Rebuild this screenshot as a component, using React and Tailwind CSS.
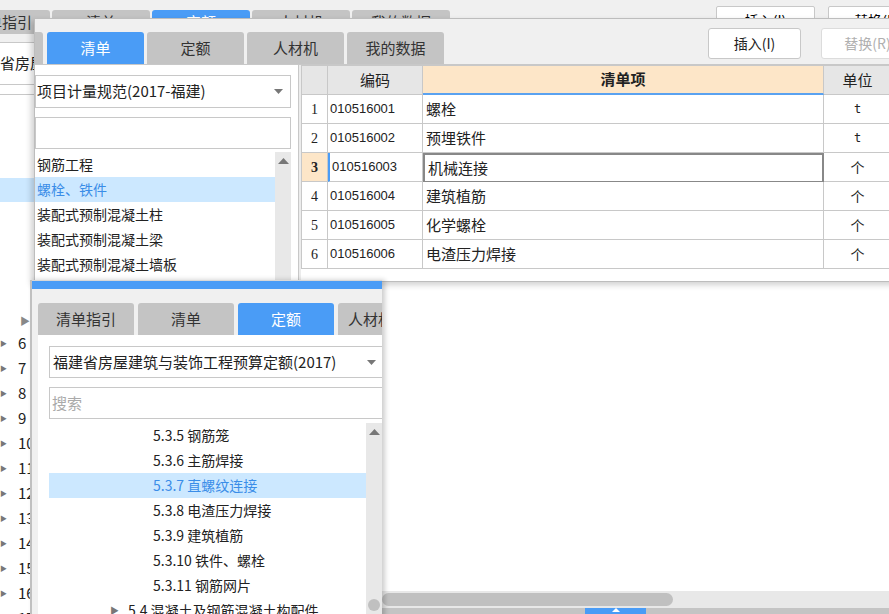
import React from 'react';

const cjk = { fontFamily: '"Microsoft YaHei", "Noto Sans CJK SC", "Liberation Sans", sans-serif' };

const Tab = ({ label, active, className = '' }) => (
  <div
    className={`flex shrink-0 items-center justify-center rounded-t-[3px] text-[15px] ${
      active ? 'bg-[#4a9cf6] text-white' : 'bg-[#c4c4c4] text-[#333]'
    } ${className}`}
  >
    {label}
  </div>
);

const Caret = ({ className = '' }) => (
  <svg width="9" height="5" viewBox="0 0 9 5" className={className}>
    <path d="M0 0h9L4.5 5z" fill="#777" />
  </svg>
);

const UpArrow = () => (
  <svg width="11" height="6" viewBox="0 0 11 6">
    <path d="M0 6L5.5 0 11 6z" fill="#777" />
  </svg>
);

const rows = [
  ['010516001', '螺栓', 't'],
  ['010516002', '预埋铁件', 't'],
  ['010516003', '机械连接', '个'],
  ['010516004', '建筑植筋', '个'],
  ['010516005', '化学螺栓', '个'],
  ['010516006', '电渣压力焊接', '个'],
];

const qdList = ['钢筋工程', '螺栓、铁件', '装配式预制混凝土柱', '装配式预制混凝土梁', '装配式预制混凝土墙板'];

const deList = ['5.3.5 钢筋笼', '5.3.6 主筋焊接', '5.3.7 直螺纹连接', '5.3.8 电渣压力焊接', '5.3.9 建筑植筋', '5.3.10 铁件、螺栓', '5.3.11 钢筋网片'];

const BackWindow = () => (
  <div className="absolute inset-0 bg-white">
    <div className="h-[43px] bg-[#f0f0f0] border-b border-[#c8c8c8] relative">
      <div className="absolute left-[-50px] top-[10px] flex gap-[2px] h-[24px]">
        <Tab label="清单指引" className="w-[100px] !justify-end pr-[18px]" />
        <Tab label="清单" className="w-[98px]" />
        <Tab label="定额" active className="w-[98px]" />
        <Tab label="人材机" className="w-[98px]" />
        <Tab label="我的数据" className="w-[98px]" />
      </div>
      <div className="absolute left-[716px] top-[6px] w-[99px] h-[28px] border border-[#c8c8c8] bg-white rounded-[2px] text-[14px] flex items-center justify-center">插入(I)</div>
      <div className="absolute left-[828px] top-[6px] w-[99px] h-[28px] border border-[#c8c8c8] bg-white rounded-[2px] text-[14px] flex items-center justify-center">替换(R)</div>
    </div>
    <div className="h-[42px] border-b border-[#c8c8c8] flex items-center overflow-hidden">
      <span className="ml-[-30px] text-[15px] whitespace-nowrap text-[#222]">福建省房屋建筑</span>
    </div>
    <div className="h-[10px] border-b border-[#c8c8c8]" />
    <div className="relative h-[500px]">
      <div className="absolute left-0 top-[83px] w-[34px] h-[24px] bg-[#cce8ff]" />
      <div className="absolute left-[20px] top-[218px] text-[#888] text-[10px]">▶</div>
      <div className="absolute left-0 top-[236px] flex flex-col">
        {[6, 7, 8, 9, 10, 11, 12, 13, 14, 15, 16, 17].map((n) => (
          <div key={n} className="h-[25px] flex items-center text-[15px] text-[#222]">
            <span className="w-[18px] text-[7px] text-[#777]">▶</span>
            <span>{n}</span>
          </div>
        ))}
      </div>
    </div>
    <div className="absolute left-[370px] top-[591px] right-0 h-[17px] bg-[#e8e8e8] flex items-center">
      <div className="ml-[12px] w-[291px] h-[13px] rounded-full bg-[#c0c0c0]" />
    </div>
    <div className="absolute left-[370px] top-[608px] right-0 h-[6px] bg-[#c4c4c4]">
      <div className="absolute left-[215px] top-0 w-[61px] h-[6px] bg-[#4a9cf6] flex justify-center">
        <svg width="8" height="4" viewBox="0 0 8 4"><path d="M0 4L4 0 8 4z" fill="#fff" /></svg>
      </div>
    </div>
  </div>
);

const MiddleWindow = () => (
  <div className="absolute left-[34px] top-[18px] w-[870px] h-[264px] bg-[#f0f0f0] border border-[#bdbdbd] shadow-[-3px_3px_6px_rgba(0,0,0,0.18)] flex flex-col">
    <div className="h-[45px] relative shrink-0">
      <div className="absolute left-0 top-[13px] flex gap-[3px] h-[32px]">
        <div className="w-[8px] bg-[#c4c4c4] rounded-tr-[3px]" />
        <Tab label="清单" active className="w-[97px] ml-[1px]" />
        <Tab label="定额" className="w-[97px]" />
        <Tab label="人材机" className="w-[97px]" />
        <Tab label="我的数据" className="w-[97px]" />
      </div>
      <div className="absolute left-[673px] top-[9px] w-[93px] h-[31px] border border-[#c8c8c8] bg-white rounded-[3px] text-[14px] text-[#222] flex items-center justify-center">插入(I)</div>
      <div className="absolute left-[786px] top-[9px] w-[93px] h-[31px] border border-[#dcdcdc] bg-white rounded-[3px] text-[14px] text-[#b0b0b0] flex items-center justify-center">替换(R)</div>
    </div>
    <div className="flex-1 flex border-t border-[#c8c8c8] bg-white">
      <div className="w-[263px] flex flex-col pt-[10px]">
        <div className="w-[256px] h-[33px] border border-[#c8c8c8] flex items-center justify-between pr-[7px] text-[15px] text-[#222]">
          <span className="pl-[1px]">项目计量规范(2017-福建)</span>
          <Caret />
        </div>
        <div className="w-[256px] h-[32px] mt-[9px] border border-[#c8c8c8]" />
        <div className="flex w-[256px] mt-[3px] flex-1">
          <div className="flex-1 flex flex-col">
            {qdList.map((t, i) => (
              <div
                key={t}
                className={`h-[25px] flex items-center pl-[2px] text-[14px] ${
                  i === 1 ? 'bg-[#cce8ff] text-[#3a8de8]' : 'text-[#222]'
                }`}
              >
                {t}
              </div>
            ))}
          </div>
          <div className="w-[16px] bg-[#e8e8e8] flex justify-center pt-[6px]">
            <div><UpArrow /></div>
          </div>
        </div>
      </div>
      <div className="w-[3px] border-l border-[#c8c8c8] bg-[#ececec]" />
      <div className="flex-1">
        <div className="border-l border-t border-[#c8c8c8]">
          <div className="flex h-[29px] text-[15px] text-[#222]">
            <div className="w-[26px] bg-[#e6e6e6] border-r border-b border-[#c8c8c8]" />
            <div className="w-[95px] bg-[#e6e6e6] border-r border-b border-[#c8c8c8] flex items-center justify-center">编码</div>
            <div className="w-[401px] bg-[#fde6c8] border-r border-b-2 border-r-[#c8c8c8] border-b-[#5aa2f0] flex items-center justify-center font-bold">清单项</div>
            <div className="w-[67px] bg-[#e6e6e6] border-b border-[#c8c8c8] flex items-center justify-center">单位</div>
          </div>
          {rows.map(([code, name, unit], i) => {
            const sel = i === 2;
            return (
              <div key={code} className="flex h-[29px] text-[#222]">
                <div
                  className={`w-[26px] border-r border-b border-[#c8c8c8] flex items-center justify-center text-[14px] ${
                    sel ? 'bg-[#fde6c8] font-bold' : 'bg-white'
                  }`}
                  style={{ fontFamily: '"Liberation Serif", serif' }}
                >
                  {i + 1}
                </div>
                <div
                  className={`w-[95px] border-r border-b border-[#c8c8c8] flex items-center pl-[2px] text-[13px] ${
                    sel ? 'border-l-2 border-l-[#4a9cf6] pl-0' : ''
                  }`}
                  style={{ fontFamily: '"Liberation Sans", sans-serif' }}
                >
                  {code}
                </div>
                <div
                  className={`w-[401px] border-b flex items-center pl-[3px] text-[15px] ${
                    sel ? 'border-2 border-[#888] pl-[2px]' : 'border-r border-[#c8c8c8]'
                  }`}
                >
                  {name}
                </div>
                <div
                  className="w-[67px] border-b border-[#c8c8c8] flex items-center justify-center text-[14px]"
                  style={unit === 't' ? { fontFamily: '"DejaVu Sans Mono", monospace', fontSize: 12 } : undefined}
                >
                  {unit}
                </div>
              </div>
            );
          })}
        </div>
      </div>
    </div>
  </div>
);

const BottomWindow = () => (
  <div className="absolute left-[30px] top-[280px] w-[352px] h-[340px] bg-[#f0f0f0] border-l-2 border-[#c0c0c0] shadow-[3px_0_5px_rgba(0,0,0,0.2)] flex flex-col overflow-hidden">
    <div className="h-[9px] shrink-0 bg-[#4a9cf6] border-t border-[#d8d8d8]" />
    <div className="h-[46px] shrink-0 flex items-end gap-[4px] pl-[6px]">
      <Tab label="清单指引" className="w-[96px] h-[32px]" />
      <Tab label="清单" className="w-[96px] h-[32px]" />
      <Tab label="定额" active className="w-[96px] h-[32px]" />
      <Tab label="人材机" className="w-[96px] h-[32px] !justify-start pl-[10px]" />
    </div>
    <div className="flex-1 bg-white ml-[6px] pl-[11px] pt-[11px] flex flex-col">
      <div className="h-[32px] shrink-0 border border-[#c8c8c8] border-r-0 flex items-center justify-between pr-[6px] pl-[3px] text-[15px] text-[#222]">
        <span>福建省房屋建筑与装饰工程预算定额(2017)</span>
        <Caret />
      </div>
      <div className="h-[32px] shrink-0 mt-[9px] border border-[#c8c8c8] border-r-0 flex items-center pl-[2px] text-[15px] text-[#aaa]">搜索</div>
      <div className="flex flex-1 mt-[4px]">
        <div className="flex-1 flex flex-col">
          {deList.map((t, i) => (
            <div
              key={t}
              className={`h-[25px] shrink-0 flex items-center pl-[104px] text-[14px] ${
                i === 2 ? 'bg-[#cce8ff] text-[#3a8de8]' : 'text-[#222]'
              }`}
            >
              {t}
            </div>
          ))}
          <div className="h-[25px] shrink-0 flex items-center pl-[61px] text-[14px] text-[#222] whitespace-nowrap">
            <span className="text-[9px] text-[#777] mr-[9px]">▶</span>5.4 混凝土及钢筋混凝土构配件
          </div>
        </div>
        <div className="w-[16px] shrink-0 bg-[#e8e8e8] flex flex-col items-center pt-[6px] relative">
          <UpArrow />
          <div className="absolute top-[176px] w-[12px] h-[12px] rounded-full bg-[#c0c0c0]" />
        </div>
      </div>
    </div>
  </div>
);

export default function App() {
  return (
    <div className="relative w-[889px] h-[614px] overflow-hidden bg-white" style={cjk}>
      <BackWindow />
      <MiddleWindow />
      <BottomWindow />
    </div>
  );
}
